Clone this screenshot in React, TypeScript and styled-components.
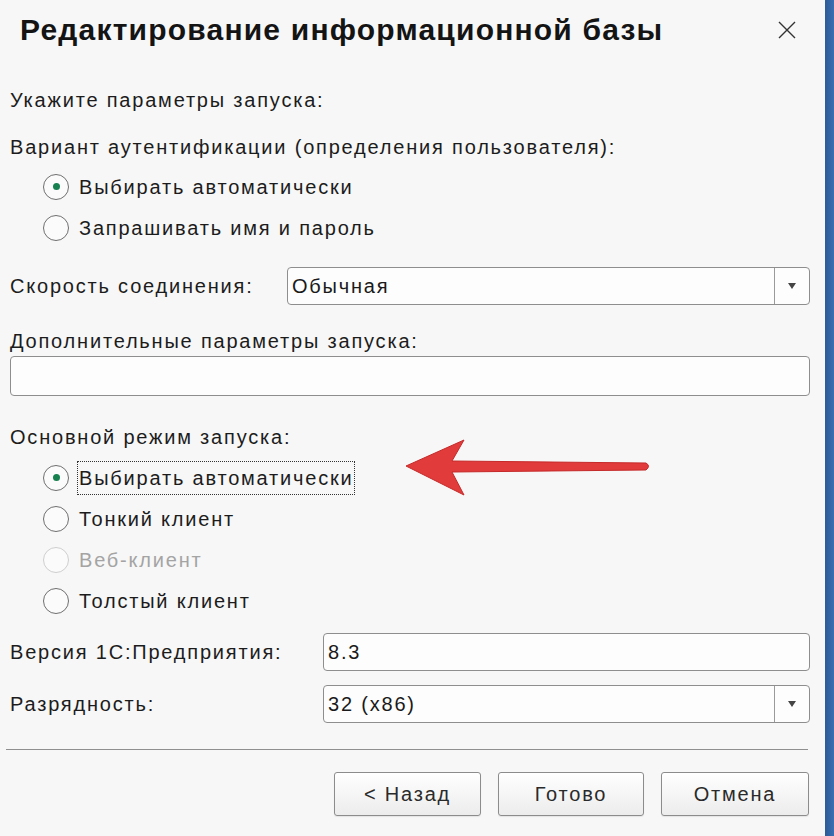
import React from 'react';
import styled, { createGlobalStyle } from 'styled-components';

const GlobalStyle = createGlobalStyle`
  html, body {
    margin: 0;
    padding: 0;
    background: #3466a6;
  }
  body {
    font-family: 'Liberation Sans', Arial, sans-serif;
    color: #1c1c1c;
  }
`;

const Page = styled.div`
  display: flex;
  width: 834px;
  height: 836px;
  overflow: hidden;
`;

const Dialog = styled.div`
  position: relative;
  width: 825px;
  height: 836px;
  background: #f7f7f7;
  display: flex;
  flex-direction: column;
`;

const FrameEdge = styled.div`
  flex: 1;
  background: linear-gradient(90deg, #2c5b98, #3a6fb0);
`;

const Header = styled.div`
  height: 60px;
  display: flex;
  align-items: center;
  justify-content: space-between;
  padding: 0 26px 0 20px;
`;

const Title = styled.h1`
  margin: 0;
  font-size: 30px;
  font-weight: bold;
  color: #141414;
  letter-spacing: 1.2px;
`;

const CloseButton = styled.button`
  width: 24px;
  height: 24px;
  padding: 0;
  border: none;
  background: none;
  display: flex;
  align-items: center;
  justify-content: center;
`;

const Body = styled.div`
  display: flex;
  flex-direction: column;
  padding: 0 15px 0 10px;
  font-size: 20px;
  letter-spacing: 1.8px;
`;

const Label = styled.div<{ $top: number }>`
  margin-top: ${({ $top }) => $top}px;
  height: 24px;
  line-height: 24px;
  white-space: nowrap;
`;

const RadioGroup = styled.div<{ $top: number }>`
  margin-top: ${({ $top }) => $top}px;
  padding-left: 33px;
  display: flex;
  flex-direction: column;
`;

const RadioRow = styled.div<{ $disabled?: boolean }>`
  height: 41px;
  display: flex;
  align-items: center;
  gap: 11px;
  color: ${({ $disabled }) => ($disabled ? '#a4a4a4' : '#1c1c1c')};
`;

const RadioCircle = styled.span<{ $checked?: boolean; $disabled?: boolean }>`
  width: 24px;
  height: 24px;
  border-radius: 50%;
  border: 1px solid ${({ $disabled }) => ($disabled ? '#cfcfcf' : '#6f6f6f')};
  background: #fbfbfb;
  display: flex;
  align-items: center;
  justify-content: center;
  flex-shrink: 0;

  &::after {
    content: '';
    width: 7px;
    height: 7px;
    border-radius: 50%;
    background: #17804f;
    display: ${({ $checked }) => ($checked ? 'block' : 'none')};
  }
`;

const RadioText = styled.span<{ $focused?: boolean }>`
  padding: 4px 1px 4px 1px;
  margin-left: -2px;
  outline: ${({ $focused }) => ($focused ? '1px dotted #333' : 'none')};
  line-height: 24px;
`;

const FieldRow = styled.div<{ $top: number; $labelWidth: number }>`
  margin-top: ${({ $top }) => $top}px;
  display: grid;
  grid-template-columns: ${({ $labelWidth }) => $labelWidth}px 1fr;
  align-items: center;
`;

const FieldLabel = styled.span`
  white-space: nowrap;
`;

const Field = styled.div<{ $height: number; $top?: number }>`
  margin-top: ${({ $top }) => $top ?? 0}px;
  height: ${({ $height }) => $height}px;
  box-sizing: border-box;
  border: 1px solid #8e8e8e;
  border-radius: 4px;
  background: #fdfdfd;
  display: flex;
  align-items: stretch;
`;

const FieldValue = styled.span`
  flex: 1;
  display: flex;
  align-items: center;
  padding-left: 4px;
  color: #1a1a1a;
`;

const DropButton = styled.span`
  width: 34px;
  border-left: 1px solid #9a9a9a;
  display: flex;
  align-items: center;
  justify-content: center;

  &::after {
    content: '';
    border-left: 4px solid transparent;
    border-right: 4px solid transparent;
    border-top: 6px solid #444;
  }
`;

const Separator = styled.hr`
  margin: 26px 2px 0 -4px;
  border: none;
  border-top: 1px solid #8f8f8f;
`;

const Footer = styled.div`
  margin-top: 22px;
  display: flex;
  justify-content: flex-end;
  gap: 17px;
  padding-right: 1px;
`;

const Button = styled.button<{ $width: number }>`
  width: ${({ $width }) => $width}px;
  height: 44px;
  border: 1px solid #8c8c8c;
  border-radius: 3px;
  background: linear-gradient(#ffffff, #ececec);
  font-family: 'Liberation Sans', Arial, sans-serif;
  font-size: 20px;
  letter-spacing: 1.8px;
  color: #2a2a2a;
  box-shadow: 0 1px 1px rgba(0, 0, 0, 0.08);
`;

const Pointer = styled.svg`
  position: absolute;
  left: 400px;
  top: 436px;
`;

const App: React.FC = () => (
  <Page>
    <GlobalStyle />
    <Dialog>
      <Header>
        <Title>Редактирование информационной базы</Title>
        <CloseButton aria-label="Закрыть">
          <svg width="18" height="18" viewBox="0 0 18 18">
            <path d="M1 1L17 17M17 1L1 17" stroke="#333" strokeWidth="1.4" fill="none" />
          </svg>
        </CloseButton>
      </Header>
      <Body>
        <Label $top={28}>Укажите параметры запуска:</Label>
        <Label $top={23}>Вариант аутентификации (определения пользователя):</Label>
        <RadioGroup $top={7}>
          <RadioRow>
            <RadioCircle $checked />
            <RadioText>Выбирать автоматически</RadioText>
          </RadioRow>
          <RadioRow>
            <RadioCircle />
            <RadioText>Запрашивать имя и пароль</RadioText>
          </RadioRow>
        </RadioGroup>
        <FieldRow $top={19} $labelWidth={277}>
          <FieldLabel>Скорость соединения:</FieldLabel>
          <Field $height={38}>
            <FieldValue>Обычная</FieldValue>
            <DropButton />
          </Field>
        </FieldRow>
        <Label $top={24}>Дополнительные параметры запуска:</Label>
        <Field $height={40} $top={3} />
        <Label $top={29}>Основной режим запуска:</Label>
        <RadioGroup $top={8}>
          <RadioRow>
            <RadioCircle $checked />
            <RadioText $focused>Выбирать автоматически</RadioText>
          </RadioRow>
          <RadioRow>
            <RadioCircle />
            <RadioText>Тонкий клиент</RadioText>
          </RadioRow>
          <RadioRow $disabled>
            <RadioCircle $disabled />
            <RadioText>Веб-клиент</RadioText>
          </RadioRow>
          <RadioRow>
            <RadioCircle />
            <RadioText>Толстый клиент</RadioText>
          </RadioRow>
        </RadioGroup>
        <FieldRow $top={12} $labelWidth={313}>
          <FieldLabel>Версия 1С:Предприятия:</FieldLabel>
          <Field $height={38}>
            <FieldValue>8.3</FieldValue>
          </Field>
        </FieldRow>
        <FieldRow $top={14} $labelWidth={313}>
          <FieldLabel>Разрядность:</FieldLabel>
          <Field $height={38}>
            <FieldValue>32 (x86)</FieldValue>
            <DropButton />
          </Field>
        </FieldRow>
        <Separator />
        <Footer>
          <Button $width={147}>&lt; Назад</Button>
          <Button $width={146}>Готово</Button>
          <Button $width={148}>Отмена</Button>
        </Footer>
      </Body>
      <Pointer width="256" height="64" viewBox="0 0 256 64">
        <path
          d="M6 30 L64 4 L52 25 L246 27 Q251 30 246 34 L52 36 L64 59 Z"
          fill="#e23b3b"
          stroke="#c42a2a"
          strokeWidth="1"
          strokeLinejoin="round"
        />
      </Pointer>
    </Dialog>
    <FrameEdge />
  </Page>
);

export default App;
